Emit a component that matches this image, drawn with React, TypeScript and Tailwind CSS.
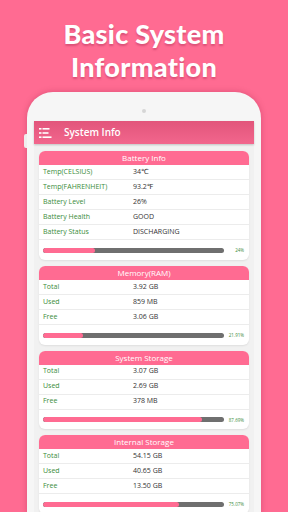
import React from "react";

type Row = { label: string; value: string };
type Section = { title: string; rows: Row[]; pct: number; pctLabel: string };

const sections: Section[] = [
  {
    title: "Battery Info",
    rows: [
      { label: "Temp(CELSIUS)", value: "34℃" },
      { label: "Temp(FAHRENHEIT)", value: "93.2℉" },
      { label: "Battery Level", value: "26%" },
      { label: "Battery Health", value: "GOOD" },
      { label: "Battery Status", value: "DISCHARGING" },
    ],
    pct: 29,
    pctLabel: "24%",
  },
  {
    title: "Memory(RAM)",
    rows: [
      { label: "Total", value: "3.92 GB" },
      { label: "Used", value: "859 MB" },
      { label: "Free", value: "3.06 GB" },
    ],
    pct: 21.91,
    pctLabel: "21.91%",
  },
  {
    title: "System Storage",
    rows: [
      { label: "Total", value: "3.07 GB" },
      { label: "Used", value: "2.69 GB" },
      { label: "Free", value: "378 MB" },
    ],
    pct: 87.69,
    pctLabel: "87.69%",
  },
  {
    title: "Internal Storage",
    rows: [
      { label: "Total", value: "54.15 GB" },
      { label: "Used", value: "40.65 GB" },
      { label: "Free", value: "13.50 GB" },
    ],
    pct: 75.07,
    pctLabel: "75.07%",
  },
];

function MenuIcon() {
  return (
    <svg width="13" height="10" viewBox="0 0 13 10" aria-hidden="true">
      <g fill="#ffffff">
        <rect x="0" y="0" width="2.5" height="1.6" />
        <rect x="3.5" y="0" width="7" height="1.6" />
        <rect x="0" y="4.2" width="2.5" height="1.6" />
        <rect x="3.5" y="4.2" width="6" height="1.6" />
        <rect x="0" y="8.4" width="2.5" height="1.6" />
        <rect x="3.5" y="8.4" width="9" height="1.6" />
      </g>
    </svg>
  );
}

function InfoCard({ section }: { section: Section }) {
  return (
    <div className="rounded-[6px] bg-white shadow-[0_1px_2px_rgba(0,0,0,0.08)]">
      <div className="h-[14px] rounded-t-[6px] bg-[#ff6b92] text-center text-[8px] leading-[14px] text-white">
        {section.title}
      </div>
      {section.rows.map((r) => (
        <div
          key={r.label}
          className="flex h-[15px] items-center border-b border-[#ececec] px-[4px] text-[7px]"
        >
          <span className="w-[90px] text-[#3a8c3a]">{r.label}</span>
          <span className="text-[#333333]">{r.value}</span>
        </div>
      ))}
      <div className="flex items-center px-[4px] pb-[6px] pt-[7px]">
        <div className="h-[5px] w-[181px] overflow-hidden rounded-full bg-[#6f6f6f]">
          <div
            className="h-full rounded-full bg-[#ff6b92]"
            style={{ width: `${section.pct}%` }}
          />
        </div>
        <span className="ml-auto pr-[1px] text-[4.5px] text-[#3a8c3a]">
          {section.pctLabel}
        </span>
      </div>
    </div>
  );
}

export default function App() {
  return (
    <div
      className="relative flex h-[512px] w-[288px] flex-col items-center overflow-hidden bg-[#ff6b92]"
      style={{ fontFamily: "'Open Sans', 'DejaVu Sans', sans-serif" }}
    >
      <h1
        className="pt-[17px] text-center text-[27px] font-black leading-[33px] tracking-[0.3px] text-white [text-shadow:0_2px_2px_rgba(150,30,70,0.35)]"
        style={{ fontFamily: "Lato, 'Open Sans', sans-serif" }}
      >
        Basic System
        <br />
        Information
      </h1>

      <div className="relative mt-[9px] flex w-[234px] flex-1 flex-col rounded-t-[26px] bg-[#f6f6f6] px-[7px] pt-[29px] shadow-[0_0_6px_rgba(120,0,40,0.25)]">
        <div className="absolute left-[-3px] top-[42px] h-[14px] w-[3px] rounded-l-[2px] bg-[#eeeeee]" />
        <div className="absolute left-1/2 top-[17px] h-[4px] w-[4px] -translate-x-1/2 rounded-full bg-[#d6d6d6]" />

        <div className="flex flex-1 flex-col bg-[#f1f1f1]">
          <div className="flex h-[23px] items-center gap-[12px] bg-[linear-gradient(#e2557b,#f2668d)] pl-[5px] shadow-[0_1px_2px_rgba(0,0,0,0.2)]">
            <MenuIcon />
            <span className="text-[10px] font-semibold text-white">System Info</span>
          </div>
          <div className="flex flex-col gap-[6px] px-[5px] pt-[7px]">
            {sections.map((s) => (
              <InfoCard key={s.title} section={s} />
            ))}
          </div>
        </div>
      </div>
    </div>
  );
}
